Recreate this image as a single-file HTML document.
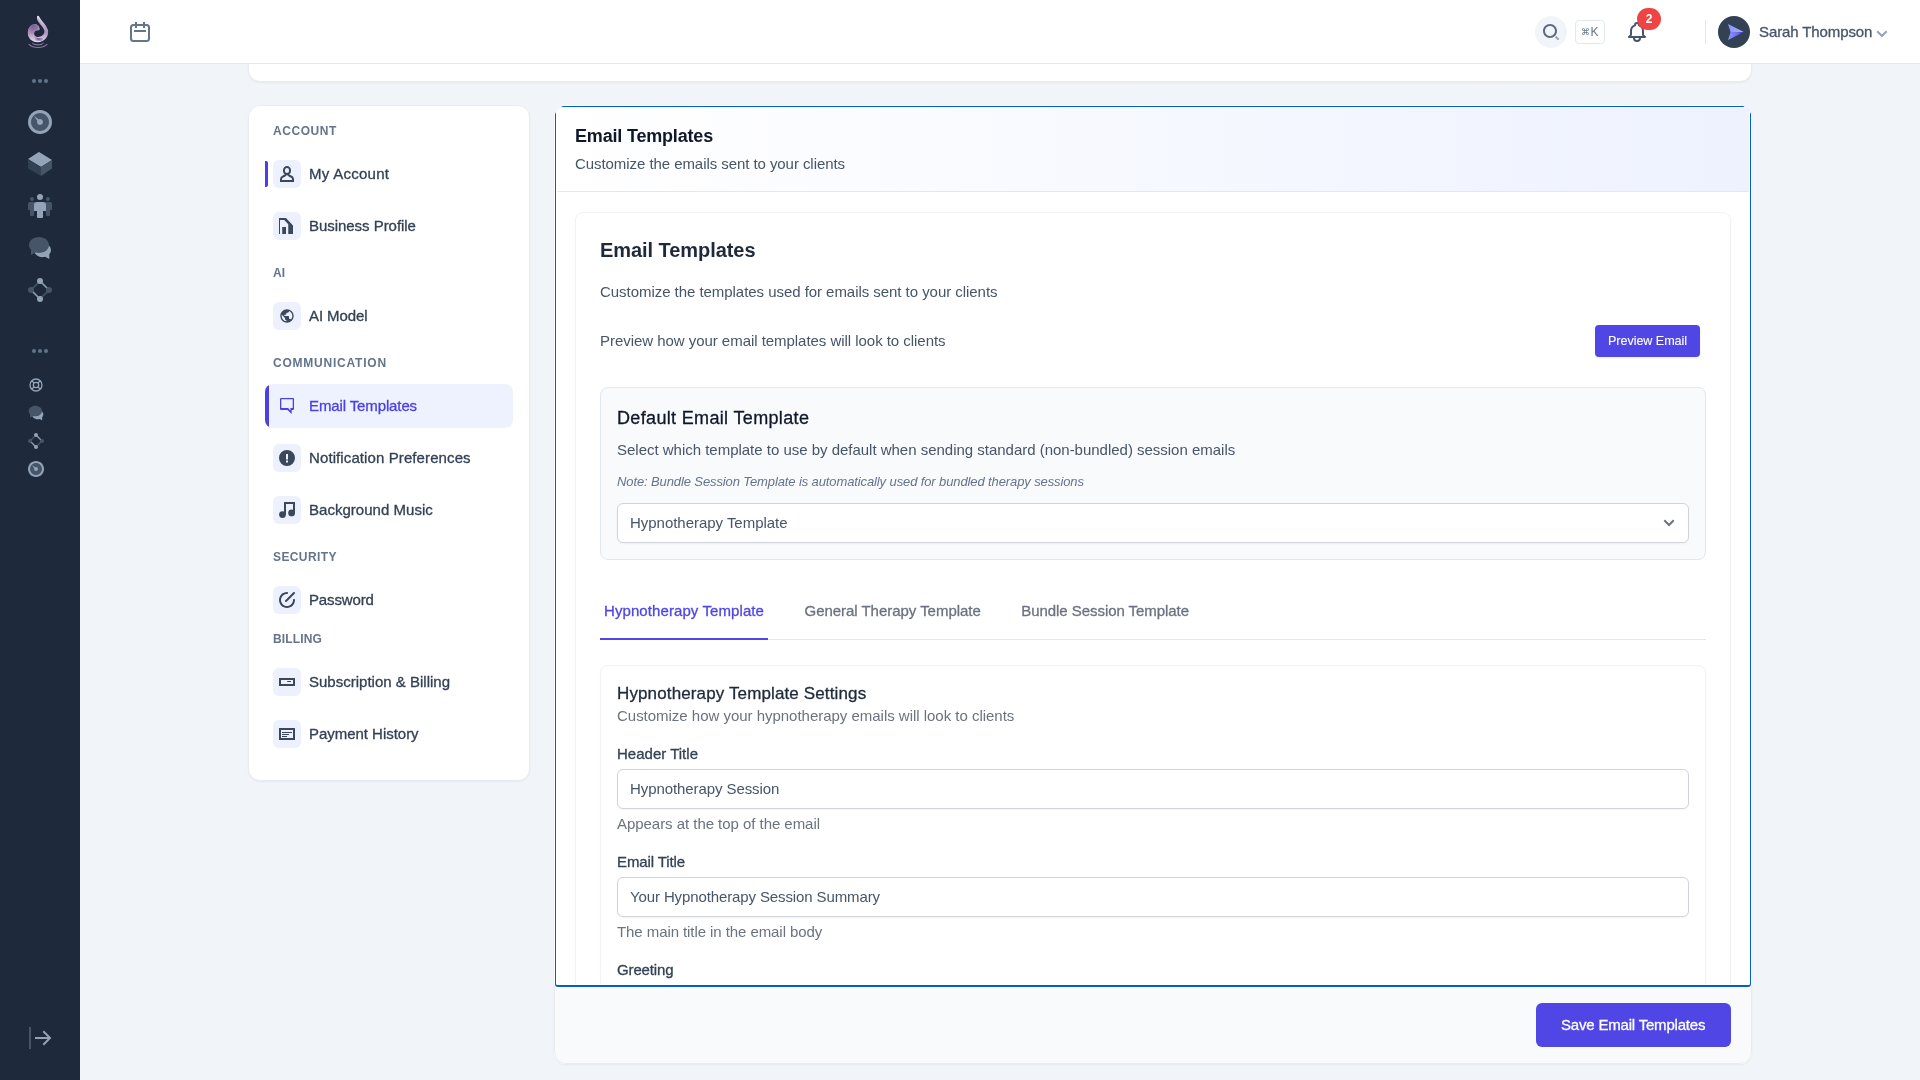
<!DOCTYPE html>
<html lang="en">
<head>
<meta charset="utf-8">
<title>Settings - Email Templates</title>
<style>
*{box-sizing:border-box;margin:0;padding:0}
html,body{width:1920px;height:1080px;overflow:hidden}
body{position:relative;background:#f1f5f9;font-family:"Liberation Sans",Arial,sans-serif;font-size:15px;line-height:20px;color:#475569}
#app{position:absolute;left:0;top:0;width:1920px;height:1080px;will-change:transform}
.abs,.t{position:absolute}
.t{white-space:nowrap;line-height:20px;font-size:15px}
.med{-webkit-text-stroke:.3px currentColor}
svg{display:block;position:absolute}
/* sidebar */
#sidebar{position:absolute;left:0;top:0;width:80px;height:1080px;background:#1e293b}
.c4{fill:#94a3b8}.c6{fill:#475569}.c7{fill:#334155}
/* topbar */
#topbar{position:absolute;left:80px;top:0;width:1840px;height:64px;background:#fff;border-bottom:1px solid #e2e8f0}
/* cards */
.card{position:absolute;background:#fff;border:1px solid #e8ecf2;border-radius:12px;box-shadow:0 1px 2px rgba(15,23,42,.05)}
/* settings nav */
#snav .lbl{font-size:12px;font-weight:700;color:#64748b;left:24px}
#snav .itm{color:#334155;left:60px}
#snav .ib{position:absolute;left:24px;width:28px;height:28px;border-radius:6px;background:#edf1fd}
#snav .ib svg{left:6px;top:6px;width:16px;height:16px;fill:#3b485c}
/* main panel */
#panel{position:absolute;left:554px;top:105px;width:1198px;height:959px;border-radius:12px;overflow:hidden;background:#fff;box-shadow:0 1px 2px rgba(15,23,42,.05)}
#panel .edge{position:absolute;left:0;top:0;right:0;bottom:0;border:1px solid #e8ecf2;border-radius:12px}
#phead{position:absolute;left:0;top:0;width:1198px;height:87px;border-bottom:1px solid #e2e8f0;background:linear-gradient(90deg,#fff 0%,#eef2ff 100%)}
#pfoot{position:absolute;left:0;top:883px;width:1198px;height:76px;background:#f8fafc}
.ring{position:absolute;left:0;top:0;width:1198px;height:883px;border:1px solid #fff;border-radius:0 0 4px 4px;pointer-events:none}
.ring i{position:absolute;left:0;top:0;right:0;bottom:0;border:1px solid #005fcc;border-bottom-width:2px;border-radius:0 0 3px 3px}
.ring i b{position:absolute;left:0;top:0;right:0;bottom:0;border:1px solid #fff;border-radius:0 0 2px 2px}
.btn{position:absolute;background:#4f46e5;color:#fff;border-radius:6px}
.box{position:absolute;border:1px solid #e2e8f0;border-radius:8px;background:#f8fafc}
.inp{position:absolute;border:1px solid #d1d5db;border-radius:6px;background:#fff;box-shadow:0 1px 2px rgba(15,23,42,.05)}
</style>
<style id="fit">
#uname{letter-spacing:-0.107px}
#l1{letter-spacing:0.543px}
#l2{letter-spacing:0.100px}
#l3{letter-spacing:0.780px}
#l4{letter-spacing:0.389px}
#l5{letter-spacing:0.129px}
#n1{letter-spacing:0.275px}
#n2{letter-spacing:-0.041px}
#n3{letter-spacing:-0.100px}
#n4{letter-spacing:-0.119px}
#n5{letter-spacing:0.102px}
#n6{letter-spacing:0.025px}
#n7{letter-spacing:-0.145px}
#n8{letter-spacing:0.004px}
#n9{letter-spacing:-0.030px}
#h2a{letter-spacing:-0.182px}
#h2b{letter-spacing:-0.064px}
#h1a{letter-spacing:-0.057px}
#p1{letter-spacing:-0.045px}
#p2{letter-spacing:-0.040px}
#b1{letter-spacing:-0.060px}
#d1{letter-spacing:0.340px}
#d2{letter-spacing:-0.015px}
#d3{letter-spacing:-0.111px}
#d4{letter-spacing:-0.031px}
#t1{letter-spacing:0.088px}
#t2{letter-spacing:-0.034px}
#t3{letter-spacing:-0.054px}
#s1{letter-spacing:0.129px}
#s2{letter-spacing:-0.021px}
#f1{letter-spacing:0.010px}
#f1v{letter-spacing:-0.084px}
#f1h{letter-spacing:-0.042px}
#f2{letter-spacing:-0.108px}
#f2v{letter-spacing:-0.114px}
#f2h{letter-spacing:-0.075px}
#f3{letter-spacing:-0.143px}
#sv{letter-spacing:-0.191px}
</style>
</head>
<body>
<div id="app">
<main>
  <div class="card" style="left:248px;top:20px;width:1504px;height:61.500px"></div>
  <nav class="card" id="snav" style="left:248px;top:105px;width:282px;height:676px">
    <div class="t lbl" id="l1" style="top:15px">ACCOUNT</div>
    <div class="abs" style="left:16px;top:55px;width:3px;height:26px;background:#4a40e3;border-radius:0 2px 2px 0"></div>
    <div class="ib" style="top:54px"><svg viewBox="0 0 16 16"><path d="M12.311 9.527c-1.161-.393-1.850-.825-2.143-1.175A3.991 3.991 0 0012 5V4c0-2.206-1.794-4-4-4S4 1.794 4 4v1c0 1.406.732 2.639 1.832 3.352-.292.350-.981.782-2.142 1.175A3.942 3.942 0 001 13.260V16h14v-2.740c0-1.690-1.081-3.190-2.689-3.733zM6 4c0-1.103.897-2 2-2s2 .897 2 2v1c0 1.103-.897 2-2 2s-2-.897-2-2V4zm7 10H3v-.740c0-.831.534-1.569 1.330-1.838 1.845-.624 3-1.436 3.452-2.422h.436c.452.986 1.607 1.798 3.453 2.422A1.943 1.943 0 0113 13.260V14z"/></svg></div>
    <div class="t itm med" id="n1" style="top:58px">My Account</div>
    <div class="ib" style="top:106px"><svg viewBox="0 0 16 16"><path d="M0 0h7l7 7.500V16H9.250V6.200L5.200 2H1v14H0zM3.200 9H7v7H3.200z"/></svg></div>
    <div class="t itm med" id="n2" style="top:110px">Business Profile</div>
    <div class="t lbl" id="l2" style="top:157px">AI</div>
    <div class="ib" style="top:196px"><svg viewBox="0 0 24 24"><path d="M12 2C6.480 2 2 6.480 2 12s4.480 10 10 10 10-4.480 10-10S17.520 2 12 2zm-1 17.930c-3.950-.490-7-3.850-7-7.930 0-.620.080-1.210.210-1.790L9 15v1c0 1.100.9 2 2 2v1.930zm6.900-2.540c-.260-.810-1-1.390-1.900-1.390h-1v-3c0-.550-.450-1-1-1H8v-2h2c.550 0 1-.450 1-1V7h2c1.100 0 2-.9 2-2v-.410c2.930 1.190 5 4.060 5 7.410 0 2.080-.8 3.970-2.100 5.390z"/></svg></div>
    <div class="t itm med" id="n3" style="top:200px">AI Model</div>
    <div class="t lbl" id="l3" style="top:247px">COMMUNICATION</div>
    <div class="abs" style="left:16px;top:278px;width:248px;height:44px;background:#eef2ff;border-radius:8px;overflow:hidden"><div class="abs" style="left:0;top:0;width:4px;height:44px;background:#4a40e3"></div></div>
    <svg style="left:30px;top:292px" width="16" height="16" viewBox="0 0 16 16"><path fill="#4a40e3" fill-rule="evenodd" d="M2 0h12a1 1 0 011 1v10a1 1 0 01-1 1h-1.300v4l-4.200-4H2a1 1 0 01-1-1V1a1 1 0 011-1zM2.300 1.300v8.800h6.800l2.300 2.300v-2.300h2.300V1.300z"/></svg>
    <div class="t itm med" id="n4" style="top:290px;color:#4a40e3">Email Templates</div>
    <div class="ib" style="top:338px"><svg viewBox="0 0 16 16"><path fill-rule="evenodd" d="M8 0a8 8 0 110 16A8 8 0 018 0zM7 4v5.500h2V4zM7 10.500v2h2v-2z"/></svg></div>
    <div class="t itm med" id="n5" style="top:342px">Notification Preferences</div>
    <div class="ib" style="top:390px"><svg viewBox="0 0 16 16"><path d="M5 0h11v10.900h-2V2H7v10.600H5z"/><circle cx="3.500" cy="12.600" r="3.400"/><circle cx="12.600" cy="10.900" r="3.400"/></svg></div>
    <div class="t itm med" id="n6" style="top:394px">Background Music</div>
    <div class="t lbl" id="l4" style="top:441px">SECURITY</div>
    <div class="ib" style="top:480px"><svg viewBox="0 0 16 16"><path d="M14.300.3c.4-.4 1-.4 1.400 0 .4.400.4 1 0 1.400l-8 8c-.2.200-.4.300-.7.300-.3 0-.5-.1-.7-.3-.4-.4-.4-1 0-1.400l8-8zM15 7c.6 0 1 .4 1 1 0 4.400-3.600 8-8 8s-8-3.600-8-8 3.600-8 8-8c.6 0 1 .4 1 1s-.4 1-1 1C4.700 2 2 4.700 2 8s2.700 6 6 6 6-2.700 6-6c0-.6.4-1 1-1z"/></svg></div>
    <div class="t itm med" id="n7" style="top:484px">Password</div>
    <div class="t lbl" id="l5" style="top:523px">BILLING</div>
    <div class="ib" style="top:562px"><svg viewBox="0 0 16 16"><path fill-rule="evenodd" d="M0 4h16v8H0zM2 6v4h12V6zM8.200 6.900H12v1.100H8.200z"/></svg></div>
    <div class="t itm med" id="n8" style="top:566px">Subscription &amp; Billing</div>
    <div class="ib" style="top:614px"><svg viewBox="0 0 16 16"><path fill-rule="evenodd" d="M0 2h16v12H0zM2 4v8h12V4zM3 6h10v1H3zM3 8h7v1H3zM3 10h5v1H3z"/></svg></div>
    <div class="t itm med" id="n9" style="top:618px">Payment History</div>
  </nav>
  <section id="panel">
    <div class="abs" style="left:0;top:0;width:1198px;height:883px;overflow:hidden">
      <div id="phead"></div>
      <h2 class="t" id="h2a" style="left:21px;top:21px;font-size:18px;font-weight:700;color:#0f172a">Email Templates</h2>
      <p class="t" id="h2b" style="left:21px;top:49px">Customize the emails sent to your clients</p>
      <div class="abs" id="ic1" style="left:21px;top:107px;width:1156px;height:900px;border:1px solid #f0f2f6;border-radius:8px;background:#fff;box-shadow:0 1px 2px rgba(15,23,42,.04)"></div>
      <h1 class="t" id="h1a" style="left:46px;top:135px;font-size:20px;font-weight:700;color:#1e293b">Email Templates</h1>
      <p class="t" id="p1" style="left:46px;top:177px">Customize the templates used for emails sent to your clients</p>
      <p class="t" id="p2" style="left:46px;top:226px">Preview how your email templates will look to clients</p>
      <div class="btn" style="left:1041px;top:220px;width:105px;height:32px;border-radius:4px;box-shadow:0 1px 2px rgba(15,23,42,.08)"></div>
      <div class="t med" id="b1" style="left:1054px;top:226px;font-size:12.600px;color:#fff;-webkit-text-stroke:.1px #fff">Preview Email</div>
      <div class="box" style="left:46px;top:282px;width:1106px;height:173px"></div>
      <h3 class="t med" id="d1" style="left:63px;top:303px;font-size:18px;font-weight:400;color:#0f172a">Default Email Template</h3>
      <p class="t" id="d2" style="left:63px;top:335px">Select which template to use by default when sending standard (non-bundled) session emails</p>
      <p class="t" id="d3" style="left:63px;top:367px;font-size:13px;font-style:italic;color:#64748b">Note: Bundle Session Template is automatically used for bundled therapy sessions</p>
      <div class="inp" style="left:63px;top:398px;width:1072px;height:40px"></div>
      <div class="t" id="d4" style="left:76px;top:408px">Hypnotherapy Template</div>
      <svg style="left:1105px;top:408px" width="20" height="20" viewBox="0 0 20 20" fill="none" stroke="#6b7280" stroke-width="2"><path d="M5.300 7.300L10 12l4.700-4.700"/></svg>
      <div class="abs" style="left:46px;top:534px;width:1106px;height:1px;background:#e5e7eb"></div>
      <div class="abs" style="left:46px;top:533px;width:168px;height:2px;background:#4f46e5"></div>
      <div class="t med" id="t1" style="left:50px;top:496px;color:#4f46e5">Hypnotherapy Template</div>
      <div class="t med" id="t2" style="left:250.500px;top:496px;color:#6b7280">General Therapy Template</div>
      <div class="t med" id="t3" style="left:467.250px;top:496px;color:#6b7280">Bundle Session Template</div>
      <div class="abs" id="ic2" style="left:46px;top:560px;width:1106px;height:500px;border:1px solid #f0f2f6;border-radius:8px;background:#fff;box-shadow:0 1px 2px rgba(15,23,42,.04)"></div>
      <h3 class="t med" id="s1" style="left:63px;top:579px;font-size:17px;font-weight:400;color:#1e293b">Hypnotherapy Template Settings</h3>
      <p class="t" id="s2" style="left:63px;top:601px;color:#6b7280">Customize how your hypnotherapy emails will look to clients</p>
      <div class="t med" id="f1" style="left:63px;top:639px;color:#334155">Header Title</div>
      <div class="inp" style="left:63px;top:664px;width:1072px;height:40px"></div>
      <div class="t" id="f1v" style="left:76px;top:674px">Hypnotherapy Session</div>
      <p class="t" id="f1h" style="left:63px;top:709px;color:#6b7280">Appears at the top of the email</p>
      <div class="t med" id="f2" style="left:63px;top:747px;color:#334155">Email Title</div>
      <div class="inp" style="left:63px;top:772px;width:1072px;height:40px"></div>
      <div class="t" id="f2v" style="left:76px;top:782px">Your Hypnotherapy Session Summary</div>
      <p class="t" id="f2h" style="left:63px;top:817px;color:#6b7280">The main title in the email body</p>
      <div class="t med" id="f3" style="left:63px;top:855px;color:#334155">Greeting</div>
    </div>
    <div id="pfoot"></div>
    <div class="btn" style="left:982px;top:898px;width:195px;height:44px"></div>
    <div class="t med" id="sv" style="left:1007px;top:910px;color:#fff">Save Email Templates</div>
    <div class="edge"></div>
    <div class="abs" style="left:0;top:0;width:1198px;height:883px;overflow:hidden;border-radius:14.500px 14.500px 0 0;pointer-events:none"><div class="ring"><i><b></b></i></div></div>
  </section>
</main>
<aside id="sidebar">
  <svg style="left:20px;top:8px" width="40" height="48" viewBox="0 0 40 48">
    <defs>
      <linearGradient id="lg1" x1="0" y1="8" x2="0" y2="34.5" gradientUnits="userSpaceOnUse">
        <stop offset="0" stop-color="#efe7f3"/><stop offset=".35" stop-color="#bfaacb"/><stop offset=".62" stop-color="#ab94bb"/><stop offset=".8" stop-color="#c9b6d3"/><stop offset="1" stop-color="#ece1ef"/>
      </linearGradient>
      <radialGradient id="lg2" cx="13" cy="17.5" r="10" gradientUnits="userSpaceOnUse">
        <stop offset="0" stop-color="#7c5e93"/><stop offset=".45" stop-color="#8b6fa2" stop-opacity=".9"/><stop offset="1" stop-color="#a98dbb" stop-opacity="0"/>
      </radialGradient>
      <radialGradient id="lg3" cx="19" cy="30.5" r="6" gradientUnits="userSpaceOnUse">
        <stop offset="0" stop-color="#6f4f8a"/><stop offset="1" stop-color="#8d6ea6" stop-opacity="0"/>
      </radialGradient>
      <clipPath id="lc"><path d="M17 8.600C17.200 7.700 18.700 7.600 19.100 8.500C20.500 12 26.200 16.500 27.800 21.500C29.5 27 25 34.2 17.8 34.2C11.5 34.2 7.8 30 7.8 25C7.8 19.5 11.5 16.2 15 16.2C18 16.2 19.8 18.8 19.6 21.5C19.4 22.4 18.6 22.3 18.2 22.2C16.5 22 14.2 23.3 14.1 25.3C14 27.5 15.8 28.9 17.8 28.9C21.5 28.9 24.4 26.5 24.4 23.3C24.4 19 17.500 15 17 10.200C16.900 9.600 16.900 9 17 8.600Z"/></clipPath>
    </defs>
    <g clip-path="url(#lc)">
      <rect x="6" y="6" width="26" height="30" fill="url(#lg1)"/>
      <rect x="6" y="6" width="15" height="24" fill="url(#lg2)"/>
      <path d="M14.2 26.5C15 30 20 31.5 24.5 29L22 33L15 32.5Z" fill="url(#lg3)"/>
    </g>
    <path d="M12.6 35.4C15.5 37.4 20.5 37.4 23.2 35.4" fill="none" stroke="#b59ac4" stroke-width="1" stroke-linecap="round" opacity=".85"/>
    <path d="M9 36.4C13.5 40.6 22.5 40.6 27 36.4" fill="none" stroke="#a88bb9" stroke-width="1.1" stroke-linecap="round" opacity=".8"/>
  </svg>
  <svg style="left:32px;top:79.300px" width="16" height="4" viewBox="0 0 16 4"><circle cx="2" cy="2" r="2" fill="#64748b"/><circle cx="8" cy="2" r="2" fill="#64748b"/><circle cx="14" cy="2" r="2" fill="#64748b"/></svg>
  <svg style="left:28px;top:110px" width="24" height="24" viewBox="0 0 24 24">
    <path class="c4" d="M12 0C5.383 0 0 5.383 0 12s5.383 12 12 12 12-5.383 12-12S18.617 0 12 0z"/>
    <path class="c6" d="M12 3c-4.963 0-9 4.037-9 9s4.037 9 9 9 9-4.037 9-9-4.037-9-9-9z"/>
    <path class="c4" d="M12 15c-1.654 0-3-1.346-3-3 0-.462.113-.894.3-1.285L6 6l4.714 3.301A2.973 2.973 0 0112 9c1.654 0 3 1.346 3 3s-1.346 3-3 3z"/>
  </svg>
  <svg style="left:28px;top:152px" width="24" height="24" viewBox="0 0 24 24">
    <path class="c4" d="M13 15l11-7L11.504.136a1 1 0 00-1.019.007L0 7l13 8z"/>
    <path class="c7" d="M13 15L0 7v9c0 .355.189.685.496.864L13 24v-9z"/>
    <path class="c6" d="M13 15.047V24l10.573-7.181A.999.999 0 0024 16V8l-11 7.047z"/>
  </svg>
  <svg style="left:28px;top:194px" width="24" height="24" viewBox="0 0 24 24">
    <path class="c6" d="M18.974 8H22a2 2 0 012 2v6h-2v5a1 1 0 01-1 1h-2a1 1 0 01-1-1v-5h-2v-6a2 2 0 012-2h.974zM20 7a2 2 0 11-.001-3.999A2 2 0 0120 7zM2.974 8H6a2 2 0 012 2v6H6v5a1 1 0 01-1 1H3a1 1 0 01-1-1v-5H0v-6a2 2 0 012-2h.974zM4 7a2 2 0 11-.001-3.999A2 2 0 014 7z"/>
    <path class="c4" d="M12 6a3 3 0 110-6 3 3 0 010 6zm2 18h-4a1 1 0 01-1-1v-6H6v-6a3 3 0 013-3h6a3 3 0 013 3v6h-3v6a1 1 0 01-1 1z"/>
  </svg>
  <svg style="left:28px;top:236px" width="24" height="24" viewBox="0 0 24 24">
    <path class="c4" d="M14.5 7c4.695 0 8.5 3.184 8.5 7.111 0 1.597-.638 3.067-1.7 4.253V23l-4.108-2.148a10 10 0 01-2.692.37c-4.695 0-8.500-3.184-8.500-7.110C6 10.183 9.805 7 14.500 7z"/>
    <path class="c6" d="M11 1C5.477 1 1 4.582 1 9c0 1.797.75 3.450 2 4.785V19l4.833-2.416C8.829 16.850 9.892 17 11 17c5.523 0 10-3.582 10-8s-4.477-8-10-8z"/>
  </svg>
  <svg style="left:28px;top:278px" width="24" height="24" viewBox="0 0 24 24">
    <path d="M3 12L12 3" stroke="#475569" stroke-width="1.6" fill="none"/>
    <path d="M12 3l9 9" stroke="#94a3b8" stroke-width="1.6" fill="none"/>
    <path d="M21 12l-9 9" stroke="#475569" stroke-width="1.6" fill="none"/>
    <path d="M12 21L3 12" stroke="#94a3b8" stroke-width="1.6" fill="none"/>
    <circle class="c6" cx="3" cy="12" r="3"/><circle class="c6" cx="21" cy="12" r="3"/>
    <circle class="c4" cx="12" cy="3" r="3"/><circle class="c4" cx="12" cy="21" r="3"/>
  </svg>
  <svg style="left:32px;top:349.300px" width="16" height="4" viewBox="0 0 16 4"><circle cx="2" cy="2" r="2" fill="#64748b"/><circle cx="8" cy="2" r="2" fill="#64748b"/><circle cx="14" cy="2" r="2" fill="#64748b"/></svg>
  <svg style="left:28px;top:377px" width="16" height="16" viewBox="0 0 24 24" fill="none" stroke="#94a3b8" stroke-width="2" stroke-linecap="round" stroke-linejoin="round">
    <path d="M18.364 5.636l-3.536 3.536m0 5.656l3.536 3.536M9.172 9.172L5.636 5.636m3.536 9.192l-3.536 3.536M21 12a9 9 0 11-18 0 9 9 0 0118 0zm-5 0a4 4 0 11-8 0 4 4 0 018 0z"/>
  </svg>
  <svg style="left:28px;top:405px" width="16" height="16" viewBox="0 0 24 24">
    <path class="c4" d="M14.5 7c4.695 0 8.5 3.184 8.5 7.111 0 1.597-.638 3.067-1.7 4.253V23l-4.108-2.148a10 10 0 01-2.692.37c-4.695 0-8.500-3.184-8.500-7.110C6 10.183 9.805 7 14.500 7z"/>
    <path class="c6" d="M11 1C5.477 1 1 4.582 1 9c0 1.797.75 3.450 2 4.785V19l4.833-2.416C8.829 16.850 9.892 17 11 17c5.523 0 10-3.582 10-8s-4.477-8-10-8z"/>
  </svg>
  <svg style="left:28px;top:433px" width="16" height="16" viewBox="0 0 24 24">
    <path d="M3 12L12 3" stroke="#475569" stroke-width="1.8" fill="none"/>
    <path d="M12 3l9 9" stroke="#94a3b8" stroke-width="1.8" fill="none"/>
    <path d="M21 12l-9 9" stroke="#475569" stroke-width="1.8" fill="none"/>
    <path d="M12 21L3 12" stroke="#94a3b8" stroke-width="1.8" fill="none"/>
    <circle class="c6" cx="3" cy="12" r="3"/><circle class="c6" cx="21" cy="12" r="3"/>
    <circle class="c4" cx="12" cy="3" r="3"/><circle class="c4" cx="12" cy="21" r="3"/>
  </svg>
  <svg style="left:28px;top:461px" width="16" height="16" viewBox="0 0 24 24">
    <path class="c4" d="M12 0C5.383 0 0 5.383 0 12s5.383 12 12 12 12-5.383 12-12S18.617 0 12 0z"/>
    <path class="c6" d="M12 3c-4.963 0-9 4.037-9 9s4.037 9 9 9 9-4.037 9-9-4.037-9-9-9z"/>
    <path class="c4" d="M12 15c-1.654 0-3-1.346-3-3 0-.462.113-.894.3-1.285L6 6l4.714 3.301A2.973 2.973 0 0112 9c1.654 0 3 1.346 3 3s-1.346 3-3 3z"/>
  </svg>
  <svg style="left:28px;top:1026px" width="24" height="24" viewBox="0 0 24 24">
    <path class="c4" d="M19.586 11l-5-5L16 4.586 23.414 12 16 19.414 14.586 18l5-5H7v-2z"/>
    <path class="c6" d="M3 23H1V1h2z"/>
  </svg>
</aside>
<header id="topbar">
  <svg style="left:48px;top:20px" width="24" height="24" viewBox="0 0 24 24" fill="none" stroke="#64748b" stroke-width="2">
    <rect x="3" y="5" width="18" height="16" rx="2.500"/><path d="M8 2v6M16 2v6M6 11h12"/>
  </svg>
  <div class="abs" style="left:1455px;top:16px;width:32px;height:32px;border-radius:16px;background:#f1f5f9">
    <svg style="left:8px;top:8px" width="16" height="16" viewBox="0 0 16 16">
      <path fill="#5b6b82" d="M7 14c-3.860 0-7-3.140-7-7s3.140-7 7-7 7 3.140 7 7-3.140 7-7 7zM7 2C4.243 2 2 4.243 2 7s2.243 5 5 5 5-2.243 5-5-2.243-5-5-5z"/>
      <path fill="#94a3b8" d="M15.707 14.293L13.314 11.900a8.019 8.019 0 01-1.414 1.414l2.393 2.393a.997.997 0 001.414 0 .999.999 0 000-1.414z"/>
    </svg>
  </div>
  <div class="abs" style="left:1495px;top:20px;width:30px;height:24px;border:1px solid #e2e8f0;border-radius:4px;background:#fff"></div>
  <div class="t" id="kbd" style="left:1501px;top:22px;font-size:12px;color:#64748b"><span style="font-family:'DejaVu Sans',sans-serif;font-size:9px;position:relative;top:-1px">⌘</span><span style="margin-left:.5px">K</span></div>
  <svg style="left:1545px;top:20px" width="24" height="24" viewBox="0 0 24 24" fill="none" stroke="#475569" stroke-width="2" stroke-linecap="round" stroke-linejoin="round">
    <path d="M15 17h5l-1.405-1.405A2.032 2.032 0 0118 14.158V11a6.002 6.002 0 00-4-5.659V5a2 2 0 10-4 0v.341C7.670 6.165 6 8.388 6 11v3.159c0 .538-.214 1.055-.595 1.436L4 17h5m6 0v1a3 3 0 11-6 0v-1m6 0H9"/>
  </svg>
  <div class="abs" style="left:1557px;top:8px;width:24px;height:22px;border-radius:11px;background:#ef4444"></div>
  <div class="t" id="badge" style="left:1557px;top:9px;width:24px;text-align:center;font-size:12px;font-weight:700;color:#fff">2</div>
  <div class="abs" style="left:1625px;top:20px;width:1px;height:24px;background:#e2e8f0"></div>
  <div class="abs" style="left:1638px;top:16px;width:32px;height:32px;border-radius:16px;background:#334155">
    <svg style="left:0;top:0" width="32" height="32" viewBox="0 0 32 32">
      <defs>
        <linearGradient id="av1" x1="10" y1="12" x2="26" y2="16" gradientUnits="userSpaceOnUse"><stop offset="0" stop-color="#8b93fa"/><stop offset="1" stop-color="#a5b0fc"/></linearGradient>
        <linearGradient id="av2" x1="11" y1="20" x2="26" y2="16" gradientUnits="userSpaceOnUse"><stop offset="0" stop-color="#8a90f9"/><stop offset=".55" stop-color="#6f6fee"/><stop offset="1" stop-color="#3a2fd0"/></linearGradient>
      </defs>
      <path d="M10 8L25.800 16H12.600z" fill="url(#av1)"/>
      <path d="M10 24L25.800 16H12.600z" fill="url(#av2)"/>
    </svg>
  </div>
  <div class="t med" id="uname" style="left:1679px;top:22px;color:#475569">Sarah Thompson</div>
  <svg style="left:1796px;top:26px" width="12" height="12" viewBox="0 0 12 12"><path fill="#94a3b8" d="M5.900 11.400L.5 6l1.400-1.400 4 4 4-4L11.300 6z"/></svg>
</header>
</div>
</body>
</html>
